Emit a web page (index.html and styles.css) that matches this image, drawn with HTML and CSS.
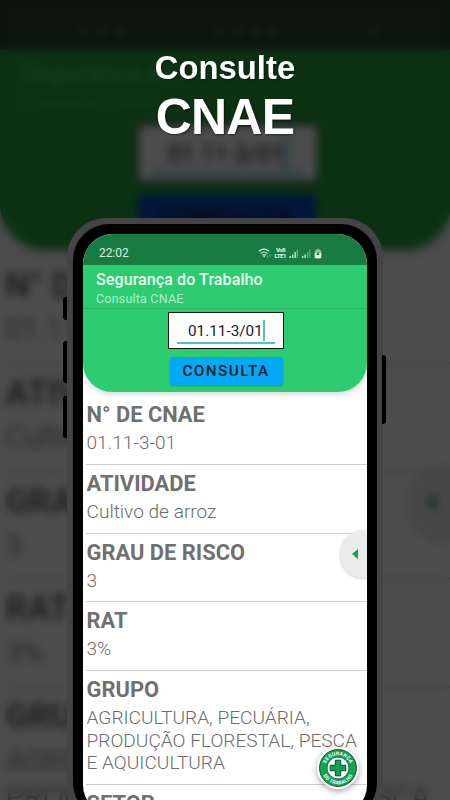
FILE: index.html
```html
<!DOCTYPE html>
<html lang="pt-BR">
<head>
<meta charset="utf-8">
<title>Consulte CNAE</title>
<link rel="stylesheet" href="styles.css">
</head>
<body>
<main class="promo">
  <div class="backdrop" aria-hidden="true">
    <div class="app">
      <div class="status"><span class="dots">● ● ●</span><span class="dots">● ● ● ●</span><span class="dots">●</span></div>
      <div class="appbar"><div class="app-title">Segurança do</div><div class="app-sub">Consulta CNAE</div></div>
      <div class="search">
        <div class="field"><div class="input"><span>01.11-3/01</span></div></div>
        <div class="button"><span>CONSULTA</span></div>
      </div>
      <div class="entries">
        <div class="entry"><h2>N° DE CNAE</h2><p>01.11-3-01</p></div>
        <div class="entry"><h2>ATIVIDADE</h2><p>Cultivo de arroz</p></div>
        <div class="entry"><h2>GRAU DE RISCO</h2><p>3</p></div>
        <div class="entry"><h2>RAT</h2><p>3%</p></div>
        <div class="entry"><h2>GRUPO</h2><p>AGRICULTURA, PECUÁRIA,<br>PRODUÇÃO FLORESTAL, PESCA</p></div>
      </div>
      <div class="drawer"><svg viewBox="0 0 6 10"><path d="M6 0v10L0 5z"/></svg></div>
    </div>
  </div>
  <div class="shade"></div>

  <header class="headline">
    <div class="line-small">Consulte</div>
    <div class="line-big">CNAE</div>
  </header>

  <div class="phone">
    <i class="key key-a"></i><i class="key key-b"></i><i class="key key-c"></i><i class="key key-d"></i>
    <div class="bezel">
      <div class="app">
        <div class="status">
          <span class="clock">22:02</span>
          <svg class="signals" viewBox="0 0 66 14">
            <g fill="none" stroke="#d9f3e3" stroke-width="1.2">
              <path d="M1 5.4Q6 1 11.4 5.4M2.8 7.4Q6.1 4.6 9.6 7.4M4.5 9.3Q6.2 8 7.9 9.3"/>
            </g>
            <path d="M5 10.3h2.4L6.2 11.6z" fill="#d9f3e3"/>
            <path d="M9.6 8.5v3M8.7 10.6l.9 1 .9-1M12 11.5v-3m-.9.9.9-1 .9 1" fill="none" stroke="#78b78f" stroke-width=".6"/>
            <text x="18" y="6.3" textLength="9.5">Vo8</text>
            <text x="16.5" y="12" textLength="12">LTE1</text>
            <path d="M31.5 10h1.3v2h-1.3zM34 8.5h1.3V12H34zM36.5 6h1.3v6h-1.3z" fill="#d9f3e3"/>
            <path d="M38.8 3.5h1.1V12h-1.1z" fill="#75b58c"/>
            <path d="M44 10h1.3v2H44zM46.4 8.5h1.3V12h-1.3z" fill="#d9f3e3"/>
            <path d="M48.9 6h1.2v6h-1.2zM51.3 3.5h1.1V12h-1.1z" fill="#75b58c"/>
            <path d="M58.5 3h3v1.2h.8q.9 0 .9.9v6.2q0 .9-.9.9h-4.6q-.9 0-.9-.9V5.1q0-.9.9-.9h.8z" fill="#8fc5a3"/>
            <path d="M56.8 7h6.4v4.3q0 .9-.9.9h-4.6q-.9 0-.9-.9z" fill="#f0fff5"/>
            <path d="M60 5.5 58.3 9h3.4z" fill="#187b41"/>
          </svg>
        </div>
        <div class="appbar"><div class="app-title">Segurança do Trabalho</div><div class="app-sub">Consulta CNAE</div></div>
        <div class="search">
          <div class="field"><div class="input"><span>01.11-3/01</span></div></div>
          <div class="button"><span>CONSULTA</span></div>
        </div>
        <div class="entries">
          <div class="entry"><h2>N° DE CNAE</h2><p>01.11-3-01</p></div>
          <div class="entry"><h2>ATIVIDADE</h2><p>Cultivo de arroz</p></div>
          <div class="entry"><h2>GRAU DE RISCO</h2><p>3</p></div>
          <div class="entry"><h2>RAT</h2><p>3%</p></div>
          <div class="entry"><h2>GRUPO</h2><p>AGRICULTURA, PECUÁRIA,<br>PRODUÇÃO FLORESTAL, PESCA<br>E AQUICULTURA</p></div>
          <div class="entry"><h2>SETOR</h2></div>
        </div>
        <div class="drawer"><svg viewBox="0 0 6 10"><path d="M6 0v10L0 5z"/></svg></div>
        <div class="fab">
          <svg viewBox="0 0 42 42">
            <defs>
              <path id="arc-top" d="M8.2 21a12.8 12.8 0 0 1 25.6 0"/>
              <path id="arc-bottom" d="M4.6 21a16.4 16.4 0 0 0 32.8 0"/>
            </defs>
            <circle cx="21" cy="21" r="18.5" fill="#0aa650" stroke="#10351f" stroke-width=".8"/>
            <circle cx="21" cy="21" r="10.9" fill="#fff" stroke="#10351f" stroke-width=".7"/>
            <path d="M18.3 13.2h5.4v5.1h5.1v5.4h-5.1v5.1h-5.4v-5.1h-5.1v-5.4h5.1z" fill="#0aa650" stroke="#10351f" stroke-width=".9"/>
            <text><textPath href="#arc-top" startOffset="50%" text-anchor="middle">SEGURANÇA</textPath></text>
            <text><textPath href="#arc-bottom" startOffset="50%" text-anchor="middle">DO TRABALHO</textPath></text>
          </svg>
        </div>
      </div>
    </div>
  </div>
</main>
</body>
</html>
```

FILE: styles.css
```css
* { box-sizing: border-box; }
body { margin: 0; font-family: Roboto, "Liberation Sans", sans-serif; }
h2, p { margin: 0; }

.promo {
  position: relative;
  width: 450px;
  height: 800px;
  overflow: hidden;
  background: #4d4d4d;
}

/* Enlarged copy of the app behind the phone, blurred and dimmed by the shade */
.backdrop {
  position: absolute;
  inset: 0;
  overflow: hidden;
}
.backdrop .app {
  width: 287px;
  height: 530px;
  transform: scale(1.57);
  transform-origin: 0 0;
}
.backdrop .status { height: 32px; background: #25432f; color: #5c8d71; padding: 7px 45px 0 50px; }
.backdrop .appbar, .backdrop .search { background: #25a63f; }
.backdrop .appbar { border-bottom-color: #25a63f; }
.backdrop .app-title { color: #65c67d; }
.backdrop .app-sub { color: #4cb565; }
.backdrop .button { background: #0a49c8; }
.dots { font-size: 11px; letter-spacing: 1px; }
.shade {
  position: absolute;
  inset: 0;
  background: rgba(0, 0, 0, .7);
  backdrop-filter: blur(4px);
}

.headline {
  position: relative;
  height: 218px;
  padding-top: 48px;
  color: #fff;
  font-family: "Liberation Sans", Arial, sans-serif;
  font-weight: 700;
  text-align: center;
  text-shadow: 1px 1px 2px rgba(0, 0, 0, .5);
}
.line-small { font-size: 32.8px; line-height: 40px; }
.line-big { font-size: 50px; line-height: 59px; letter-spacing: -.8px; }

.phone {
  position: relative;
  width: 316px;
  height: 607px;
  margin-left: 67px;
  padding: 6px;
  border-radius: 39px;
  background: #444448;
}
.bezel {
  height: 595px;
  padding: 10px;
  border-radius: 36px;
  background: #000;
}
.bezel .app { width: 284px; height: 581px; border-radius: 30px; }

.key { position: absolute; width: 4px; left: -4px; background: #000; border-radius: 3px 0 0 3px; }
.key-a { top: 79px; height: 23px; }
.key-b { top: 123px; height: 42px; }
.key-c { top: 178px; height: 42px; }
.key-d { top: 137px; height: 69px; left: auto; right: -3px; border-radius: 0 3px 3px 0; }

.app { position: relative; overflow: hidden; background: #fff; }
.status {
  height: 31px;
  padding: 7px 43px 0 16px;
  display: flex;
  align-items: center;
  justify-content: space-between;
  background: #187b41;
  color: #d9f3e3;
}
.clock { font-size: 11.9px; }
.signals { width: 66px; height: 14px; }
.signals text { font: 700 6px Roboto, sans-serif; fill: #e5f8ec; }

.appbar { height: 44px; padding: 6px 13px 0; background: #2ecc71; border-bottom: 1px solid #29bd66; white-space: nowrap; }
.app-title { font-size: 16px; line-height: 18px; font-weight: 500; letter-spacing: .1px; color: #e9fff2; }
.app-sub { font-size: 12.5px; line-height: 19px; color: #b1edca; letter-spacing: .2px; }

.search {
  height: 83px;
  padding: 3px 0 0 2px;
  display: flex;
  flex-direction: column;
  align-items: center;
  gap: 8px;
  border-radius: 0 0 29px 29px;
  background: #2ecc71;
  box-shadow: 0 2px 6px rgba(0, 0, 0, .18);
}
.field { width: 116px; height: 37px; padding: 7px 8px 0; border: 1px solid #111; background: #fff; }
.input { height: 24px; padding-left: 11px; border-bottom: 2px solid #4fbfcb; font-size: 15.3px; line-height: 23px; color: #222; }
.input span { display: inline-block; height: 21px; border-right: 2px solid #4fbfcb; }
.button {
  width: 113px;
  height: 28px;
  border-radius: 2px;
  background: #03a9f4;
  box-shadow: 0 1px 2px rgba(0, 0, 0, .2);
  color: #0b1c25;
  font-size: 15.3px;
  font-weight: 500;
  line-height: 29px;
  letter-spacing: 1.4px;
  text-align: center;
}

.entries { padding: 4px 0 0 3px; }
.entry { padding: 5px 0 9.25px; border-bottom: 1px solid #cfcfcf; white-space: nowrap; }
.entry h2 { height: 31px; padding-left: .5px; font-size: 21.9px; line-height: 28.5px; font-weight: 700; color: #707070; }
.entry p { padding-left: .5px; font-size: 19.1px; line-height: 22.5px; font-weight: 350; color: #6c6c6c; }

.drawer {
  position: absolute;
  right: -20px;
  top: 296px;
  width: 47px;
  height: 48px;
  padding: 18.5px 0 0 12px;
  border-radius: 50%;
  background: #ebebeb;
  box-shadow: 0 1px 3px rgba(0, 0, 0, .2);
}
.drawer svg { display: block; width: 6px; height: 10px; fill: #10a04e; }

.fab {
  position: absolute;
  left: 234px;
  top: 513px;
  width: 42px;
  height: 42px;
  border-radius: 50%;
  background: #fff;
  box-shadow: 0 2px 6px rgba(0, 0, 0, .35);
}
.fab svg { display: block; }
.fab text { font: 700 5px Roboto, sans-serif; fill: #fff; letter-spacing: .2px; }
```
